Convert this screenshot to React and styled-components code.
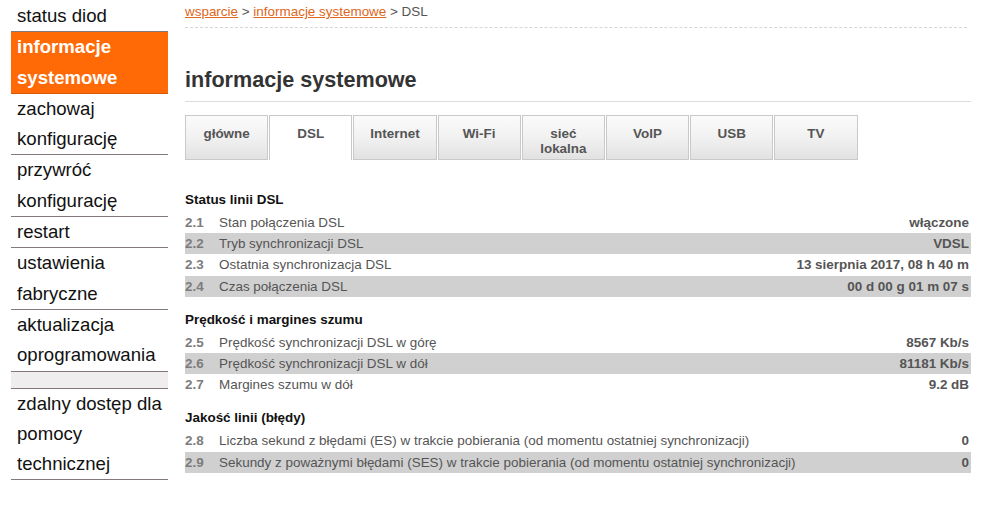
import React from "react";
import styled, { createGlobalStyle } from "styled-components";

const GlobalStyle = createGlobalStyle`
  body {
    margin: 0;
    background: #fff;
    font-family: "Liberation Sans", Arial, sans-serif;
  }
`;

const menu = [
  { label: "status diod" },
  { label: "informacje systemowe", active: true },
  { label: "zachowaj konfigurację" },
  { label: "przywróć konfigurację" },
  { label: "restart" },
  { label: "ustawienia fabryczne" },
  { label: "aktualizacja oprogramowania" },
  { label: "", spacer: true },
  { label: "zdalny dostęp dla pomocy technicznej" },
];

const tabs = ["główne", "DSL", "Internet", "Wi-Fi", "sieć lokalna", "VoIP", "USB", "TV"];

const sections = [
  {
    title: "Status linii DSL",
    rows: [
      ["2.1", "Stan połączenia DSL", "włączone"],
      ["2.2", "Tryb synchronizacji DSL", "VDSL"],
      ["2.3", "Ostatnia synchronizacja DSL", "13 sierpnia 2017, 08 h 40 m"],
      ["2.4", "Czas połączenia DSL", "00 d 00 g 01 m 07 s"],
    ],
  },
  {
    title: "Prędkość i margines szumu",
    rows: [
      ["2.5", "Prędkość synchronizacji DSL w górę", "8567 Kb/s"],
      ["2.6", "Prędkość synchronizacji DSL w dół", "81181 Kb/s"],
      ["2.7", "Margines szumu w dół", "9.2 dB"],
    ],
  },
  {
    title: "Jakość linii (błędy)",
    rows: [
      ["2.8", "Liczba sekund z błędami (ES) w trakcie pobierania (od momentu ostatniej synchronizacji)", "0"],
      ["2.9", "Sekundy z poważnymi błędami (SES) w trakcie pobierania (od momentu ostatniej synchronizacji)", "0"],
    ],
  },
];

const App = () => (
  <>
    <GlobalStyle />
    <Page>
      <Sidebar>
        {menu.map((item, i) => (
          <MenuItem key={i} $active={item.active} $spacer={item.spacer}>
            {item.label}
          </MenuItem>
        ))}
      </Sidebar>
      <Main>
        <Breadcrumb>
          <a href="#">wsparcie</a> &gt; <a href="#">informacje systemowe</a> &gt; DSL
        </Breadcrumb>
        <Title>informacje systemowe</Title>
        <Tabs>
          {tabs.map(t => (
            <Tab key={t} $active={t === "DSL"}>
              {t === "sieć lokalna" ? (
                <>
                  sieć
                  <br />
                  lokalna
                </>
              ) : (
                t
              )}
            </Tab>
          ))}
        </Tabs>
        {sections.map(sec => (
          <Section key={sec.title}>
            <SectionTitle>{sec.title}</SectionTitle>
            {sec.rows.map(([num, label, value], i) => (
              <Row key={num} $shaded={i % 2 === 1}>
                <Num>{num}</Num>
                <Label>{label}</Label>
                <Value>{value}</Value>
              </Row>
            ))}
          </Section>
        ))}
      </Main>
    </Page>
  </>
);

const Page = styled.div`
  display: flex;
  align-items: flex-start;
  gap: 17px;
  padding-left: 11px;
`;

const Sidebar = styled.nav`
  width: 157px;
  flex-shrink: 0;
  padding-top: 1px;
  display: flex;
  flex-direction: column;
`;

const MenuItem = styled.div`
  font-size: 18.6px;
  line-height: 30.3px;
  padding-left: 6px;
  color: ${p => (p.$active ? "#fff" : "#111")};
  font-weight: ${p => (p.$active ? "bold" : "normal")};
  background: ${p => (p.$active ? "#ff6a06" : p.$spacer ? "#efeded" : "transparent")};
  border-bottom: 1px solid ${p => (p.$active ? "#d95a08" : "#85787a")};
  height: ${p => (p.$spacer ? "16px" : "auto")};
`;

const Main = styled.main`
  width: 786px;
  flex-shrink: 0;
`;

const Breadcrumb = styled.div`
  font-size: 13.45px;
  line-height: 16px;
  color: #555;
  padding: 4px 0 7px;
  margin-right: 4px;
  border-bottom: 1px dashed #d6d6d6;

  a {
    color: #e0661c;
    text-decoration: underline;
  }
`;

const Title = styled.h1`
  margin: 40px 0 0;
  font-size: 21.6px;
  line-height: 24px;
  font-weight: bold;
  color: #333;
  padding-bottom: 9px;
  border-bottom: 1px solid #dcdcdc;
`;

const Tabs = styled.div`
  display: flex;
  margin-top: 13px;
`;

const Tab = styled.div`
  box-sizing: border-box;
  width: 83.2px;
  height: 45px;
  margin-right: 1px;
  padding-top: 10px;
  text-align: center;
  font-size: 13.45px;
  line-height: 15px;
  font-weight: bold;
  color: #555;
  border: 1px solid #c9c9c9;
  border-bottom: ${p => (p.$active ? "none" : "1px solid #c9c9c9")};
  background: ${p =>
    p.$active ? "#fff" : "linear-gradient(to bottom, #fbfbfb 0%, #f1f1f1 50%, #e2e2e2 100%)"};
`;

const Section = styled.section`
  &:first-of-type {
    margin-top: 17px;
  }
`;

const SectionTitle = styled.h2`
  margin: 0;
  padding: 14px 0 3px;
  font-size: 13.45px;
  line-height: 18px;
  font-weight: bold;
  color: #111;
`;

const Row = styled.div`
  display: flex;
  align-items: center;
  height: 21.2px;
  font-size: 13.45px;
  background: ${p => (p.$shaded ? "#d0d0d0" : "transparent")};
`;

const Num = styled.span`
  width: 34px;
  font-weight: bold;
  color: #7c7c7c;
`;

const Label = styled.span`
  flex: 1;
  color: #555;
`;

const Value = styled.span`
  font-weight: bold;
  color: #555;
  padding-right: 2px;
`;

export default App;
